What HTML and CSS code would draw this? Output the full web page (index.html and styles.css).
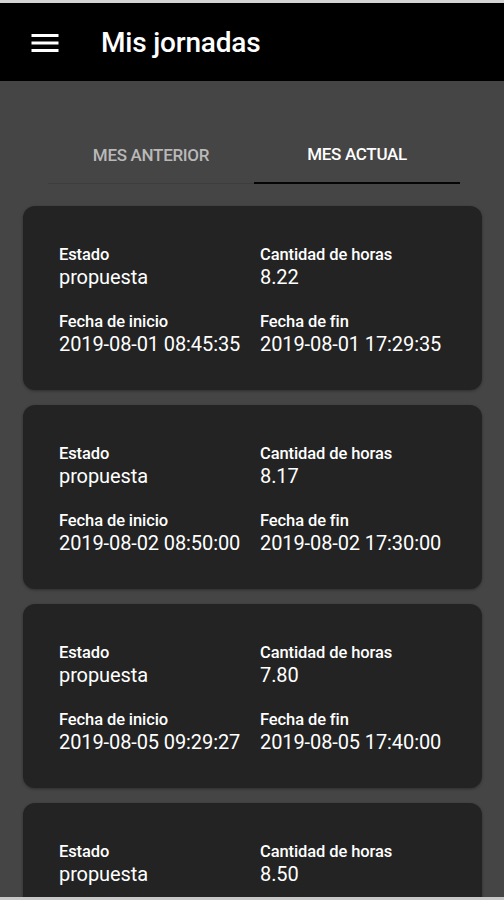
FILE: index.html
```html
<!DOCTYPE html>
<html lang="es">
<head>
    <meta charset="UTF-8">
    <meta name="viewport" content="width=device-width, initial-scale=1.0">
    <title>Mis jornadas</title>
    <link rel="stylesheet" href="styles.css">
</head>
<body>
    <div class="screen">
        <header class="appbar">
            <svg class="menu" viewBox="0 0 24 24" width="36" height="36">
                <path fill="#fff" d="M3 18h18v-2H3v2zm0-5h18v-2H3v2zm0-7v2h18V6H3z"/>
            </svg>
            <h1>Mis jornadas</h1>
        </header>

        <nav class="tabs">
            <div class="tab">MES ANTERIOR</div>
            <div class="tab active">MES ACTUAL</div>
        </nav>

        <main class="list">
            <section class="card">
                <div class="field"><span class="label">Estado</span><span class="value">propuesta</span></div>
                <div class="field"><span class="label">Cantidad de horas</span><span class="value">8.22</span></div>
                <div class="field"><span class="label">Fecha de inicio</span><span class="value">2019-08-01 08:45:35</span></div>
                <div class="field"><span class="label">Fecha de fin</span><span class="value">2019-08-01 17:29:35</span></div>
            </section>
            <section class="card">
                <div class="field"><span class="label">Estado</span><span class="value">propuesta</span></div>
                <div class="field"><span class="label">Cantidad de horas</span><span class="value">8.17</span></div>
                <div class="field"><span class="label">Fecha de inicio</span><span class="value">2019-08-02 08:50:00</span></div>
                <div class="field"><span class="label">Fecha de fin</span><span class="value">2019-08-02 17:30:00</span></div>
            </section>
            <section class="card">
                <div class="field"><span class="label">Estado</span><span class="value">propuesta</span></div>
                <div class="field"><span class="label">Cantidad de horas</span><span class="value">7.80</span></div>
                <div class="field"><span class="label">Fecha de inicio</span><span class="value">2019-08-05 09:29:27</span></div>
                <div class="field"><span class="label">Fecha de fin</span><span class="value">2019-08-05 17:40:00</span></div>
            </section>
            <!-- last card only shows its first row above the fold -->
            <section class="card">
                <div class="field"><span class="label">Estado</span><span class="value">propuesta</span></div>
                <div class="field"><span class="label">Cantidad de horas</span><span class="value">8.50</span></div>
            </section>
        </main>
    </div>
</body>
</html>
```

FILE: styles.css
```css
body { margin: 0; font-family: Roboto, "Noto Sans", sans-serif; background: #444; }
.screen { height: 900px; box-sizing: border-box; overflow: hidden; background: #454545; border-top: 3px solid #d4d4d4; border-bottom: 3px solid #c8c8c8; }

.appbar { height: 78px; background: #000; display: flex; align-items: center; padding-left: 27px; }
.menu { display: block; margin-top: 1px; }
.appbar h1 { margin: 0 0 0 38px; color: #fff; font-size: 28px; font-weight: 500; letter-spacing: -0.2px; }

.tabs { display: flex; margin: 55px 44px 0 48px; border-bottom: 1px solid #3d3d3d; }
.tab { flex: 1; height: 47px; box-sizing: border-box; padding-bottom: 10px; display: flex; align-items: center; justify-content: center; font-size: 17px; font-weight: 500; color: #b9b9b9; letter-spacing: -0.3px; }
.tab.active { color: #fff; border-bottom: 2px solid #050505; height: 48px; margin-bottom: -1px; padding-bottom: 11px; }

.list { display: flex; flex-direction: column; gap: 15px; margin: 22px 22px 0 23px; }
.card { height: 184px; box-sizing: border-box; padding: 39px 20px 0 36px; background: #232323; border-radius: 12px; box-shadow: 0 1px 3px rgba(0, 0, 0, 0.35); display: grid; grid-template-columns: 201px 1fr; row-gap: 23px; align-content: start; }
.field { display: flex; flex-direction: column; color: #fff; }
.label { font-size: 16.5px; line-height: 20px; font-weight: 500; letter-spacing: -0.1px; }
.value { font-size: 20px; line-height: 24px; letter-spacing: -0.1px; }
```
